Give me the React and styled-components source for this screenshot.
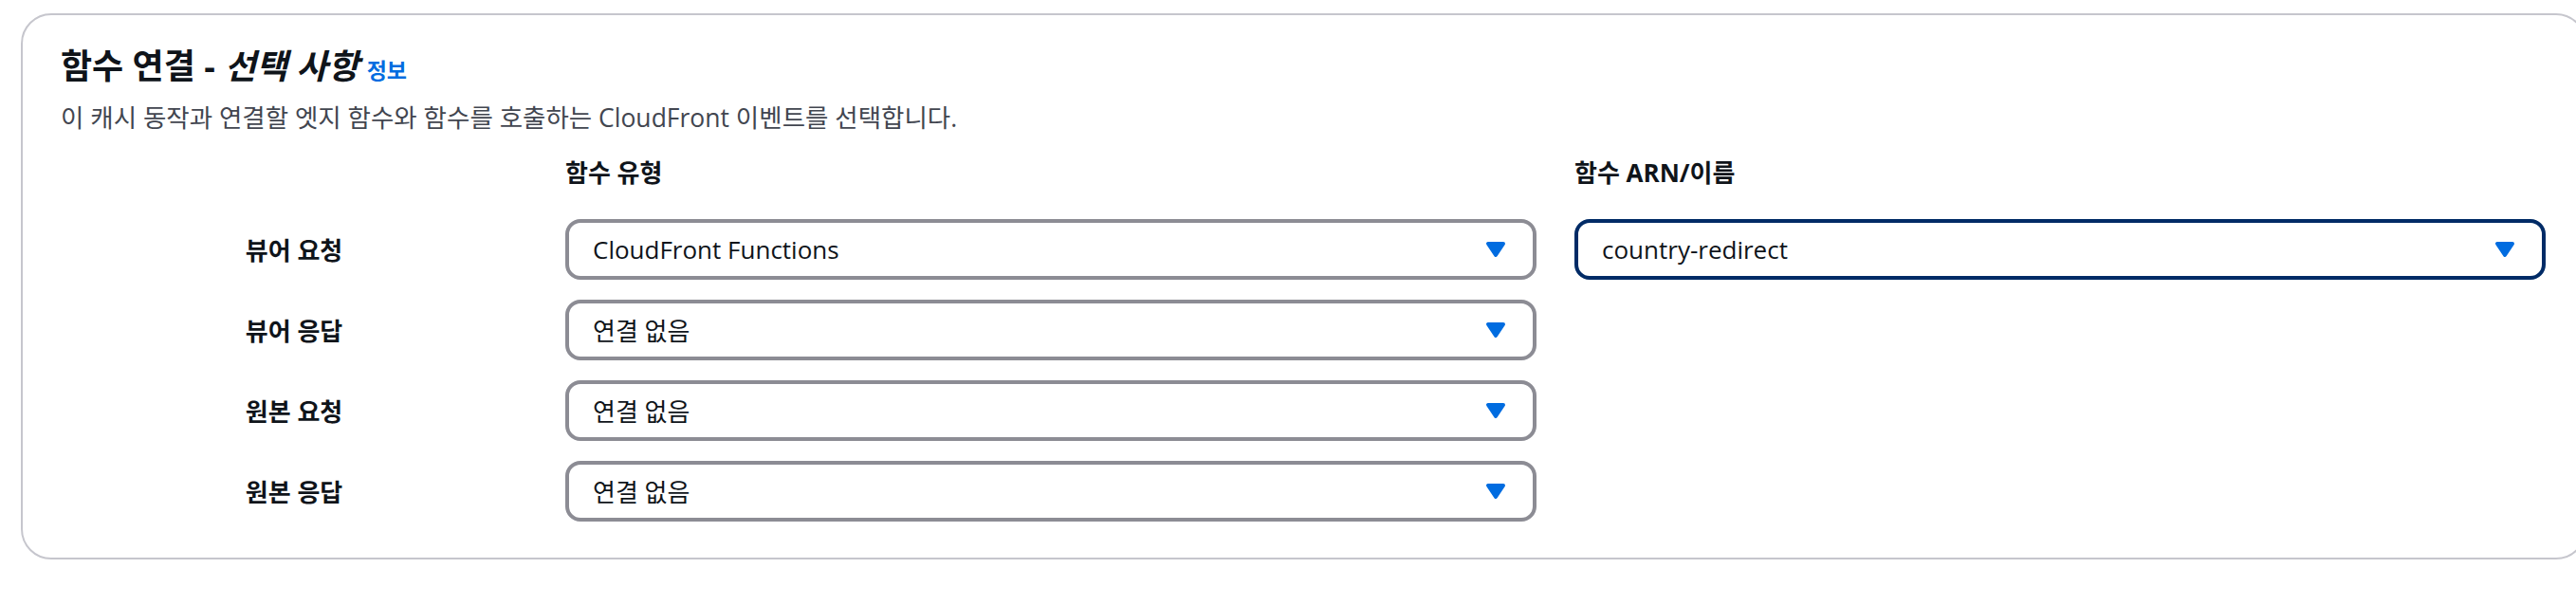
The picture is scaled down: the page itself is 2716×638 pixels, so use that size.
import React from 'react'
import styled, { createGlobalStyle } from 'styled-components'

const GlobalStyle = createGlobalStyle`
  html, body {
    margin: 0;
    padding: 0;
    overflow: hidden;
    background: #ffffff;
  }
  body {
    font-family: "Open Sans", "Noto Sans CJK KR", sans-serif;
    color: #0f141a;
  }
`

const Page = styled.div`
  padding: 14px 0 0 22px;
`

const Card = styled.section`
  width: 2705px;
  box-sizing: border-box;
  border: 2px solid #c6c6cd;
  border-radius: 32px;
  padding: 32px 40px 38px;
  background: #fff;
`

const Title = styled.h2`
  margin: 0;
  font-size: 36px;
  line-height: 44px;
  font-weight: 700;
  color: #0f141a;
  display: flex;
  align-items: baseline;
`

const Optional = styled.em`
  font-style: italic;
  margin-left: 10px;
`

const InfoLink = styled.a`
  margin-left: 8px;
  font-size: 23px;
  font-weight: 700;
  color: #006ce0;
  text-decoration: none;
`

const Description = styled.p`
  margin: 10px 0 0;
  font-size: 26.5px;
  line-height: 36px;
  color: #424650;
`

const Grid = styled.div`
  margin-top: 22px;
  display: grid;
  grid-template-columns: 492px 1024px 1024px;
  column-gap: 40px;
  row-gap: 21px;
`

const ColumnHeader = styled.div`
  font-size: 26px;
  line-height: 36px;
  font-weight: 700;
  margin-bottom: 10px;
`

const RowLabel = styled.div`
  display: flex;
  align-items: center;
  justify-content: center;
  font-size: 26px;
  font-weight: 700;
`

const Select = styled.div`
  height: 64px;
  box-sizing: border-box;
  border: 4px solid ${p => (p.$focused ? '#002b66' : '#8c8c94')};
  border-radius: 16px;
  padding: 0 23px 0 25px;
  display: flex;
  align-items: center;
  justify-content: space-between;
  font-size: 26px;
  color: #0f141a;
  background: #fff;
`

const Caret = styled.svg`
  width: 32px;
  height: 32px;
  color: #006ce0;
  flex-shrink: 0;
`

const CaretDown = () => (
  <Caret viewBox="0 0 16 16">
    <path d="M4 5h8l-4 6-4-6z" fill="currentColor" stroke="currentColor" strokeWidth="2" strokeLinejoin="round" />
  </Caret>
)

const rows = [
  { label: '뷰어 요청', type: 'CloudFront Functions', arn: 'country-redirect' },
  { label: '뷰어 응답', type: '연결 없음' },
  { label: '원본 요청', type: '연결 없음' },
  { label: '원본 응답', type: '연결 없음' },
]

const App = () => {
  return (
    <Page>
      <GlobalStyle />
      <Card>
        <Title>
          함수 연결 -<Optional>선택 사항</Optional>
          <InfoLink href="#">정보</InfoLink>
        </Title>
        <Description>이 캐시 동작과 연결할 엣지 함수와 함수를 호출하는 CloudFront 이벤트를 선택합니다.</Description>
        <Grid>
          <div />
          <ColumnHeader>함수 유형</ColumnHeader>
          <ColumnHeader>함수 ARN/이름</ColumnHeader>
          {rows.map(row => (
            <React.Fragment key={row.label}>
              <RowLabel>{row.label}</RowLabel>
              <Select>
                <span>{row.type}</span>
                <CaretDown />
              </Select>
              {row.arn ? (
                <Select $focused>
                  <span>{row.arn}</span>
                  <CaretDown />
                </Select>
              ) : (
                <div />
              )}
            </React.Fragment>
          ))}
        </Grid>
      </Card>
    </Page>
  )
}

export default App
